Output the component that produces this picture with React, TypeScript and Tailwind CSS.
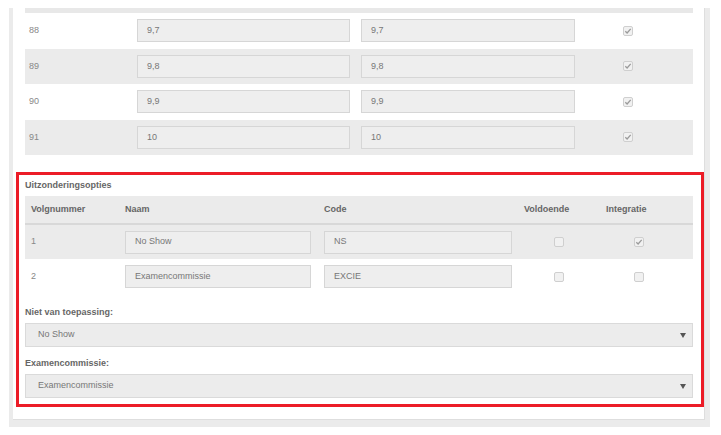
import React from "react";

const font = { fontFamily: '"Liberation Sans", Arial, sans-serif' };

function Check({ checked }: { checked?: boolean }) {
  return (
    <div className="w-[10px] h-[10px] rounded-[2px] border border-[#cfcfcf] bg-[#f1f1f1] flex items-center justify-center">
      {checked && (
        <svg width="8" height="8" viewBox="0 0 8 8">
          <path d="M1.3 4.3 L3.1 6 L6.7 1.8" fill="none" stroke="#9a9a9a" strokeWidth="1.3" />
        </svg>
      )}
    </div>
  );
}

function Field({ value, width }: { value: string; width: string }) {
  return (
    <div
      className={`${width} h-[23px] border border-[#d6d6d6] bg-[#eeeeee] pl-[9px] flex items-center text-[9px] text-[#777]`}
    >
      {value}
    </div>
  );
}

function Select({ value }: { value: string }) {
  return (
    <div className="h-[24px] border border-[#dadada] bg-[#ececec] pl-[12px] pr-[6px] flex items-center justify-between text-[9px] text-[#777]">
      <span>{value}</span>
      <svg width="6" height="5" viewBox="0 0 6 5">
        <path d="M0 0 H6 L3 5 Z" fill="#555" />
      </svg>
    </div>
  );
}

const topRows = [
  { n: "88", v: "9,7" },
  { n: "89", v: "9,8" },
  { n: "90", v: "9,9" },
  { n: "91", v: "10" },
];

const options = [
  { n: "1", naam: "No Show", code: "NS", voldoende: false, integratie: true },
  { n: "2", naam: "Examencommissie", code: "EXCIE", voldoende: false, integratie: false },
];

export default function App() {
  return (
    <div className="w-[721px] h-[435px] bg-white pt-[8px] overflow-hidden" style={font}>
      <div className="ml-[9px] w-[701px] h-[419px] bg-[#ebebeb] pl-[4px] pr-[5px] pb-[7px]">
        <div className="w-[692px] h-[412px] bg-white border-r border-b border-[#dedede]">
          {/* grade rows */}
          <div className="ml-[12px] w-[668px]">
            <div className="h-[5px] bg-[#e8e8e8]" />
            {topRows.map((r, i) => (
              <div
                key={r.n}
                className={`h-[35.5px] grid grid-cols-[112px_224px_224px_1fr] items-center ${
                  i % 2 === 1 ? "bg-[#ebebeb]" : "bg-white"
                }`}
              >
                <div className="pl-[4px] text-[9px] text-[#888]">{r.n}</div>
                <Field value={r.v} width="w-[213px]" />
                <Field value={r.v} width="w-[214px]" />
                <div className="pl-[38px]">
                  <Check checked />
                </div>
              </div>
            ))}
          </div>

          {/* highlighted exceptions block */}
          <div className="mt-[17px] ml-[3px] w-[688px] border-[3px] border-[#ec1c27] pl-[6px] pr-[8px] pb-[6px]">
            <div className="h-[21px] flex items-center text-[9px] font-bold text-[#666]">
              Uitzonderingsopties
            </div>
            <div className="h-[29px] grid grid-cols-[100px_199px_200px_82px_1fr] items-center bg-[#ebebeb] border-b-2 border-[#d8d8d8] text-[9px] font-bold text-[#666]">
              <div className="pl-[6px]">Volgnummer</div>
              <div>Naam</div>
              <div>Code</div>
              <div>Voldoende</div>
              <div>Integratie</div>
            </div>
            {options.map((o, i) => (
              <div
                key={o.n}
                className={`${i === 0 ? "h-[34px] bg-[#ebebeb]" : "h-[35px] bg-white"} grid grid-cols-[100px_199px_200px_82px_1fr] items-center`}
              >
                <div className="pl-[6px] text-[9px] text-[#888]">{o.n}</div>
                <Field value={o.naam} width="w-[186px]" />
                <Field value={o.code} width="w-[188px]" />
                <div className="pl-[30px]">
                  <Check checked={o.voldoende} />
                </div>
                <div className="pl-[28px]">
                  <Check checked={o.integratie} />
                </div>
              </div>
            ))}
            <div className="pt-[13px] pb-[5px] leading-[11px] text-[9px] font-bold text-[#666]">
              Niet van toepassing:
            </div>
            <Select value="No Show" />
            <div className="pt-[11px] pb-[5px] leading-[11px] text-[9px] font-bold text-[#666]">
              Examencommissie:
            </div>
            <Select value="Examencommissie" />
          </div>
        </div>
      </div>
    </div>
  );
}
